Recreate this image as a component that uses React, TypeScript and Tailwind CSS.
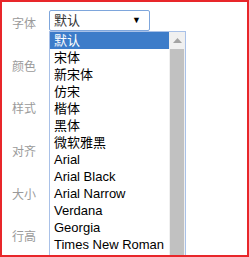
const LABELS = ["字体", "颜色", "样式", "对齐", "大小", "行高"];
const FONTS = [
  "默认",
  "宋体",
  "新宋体",
  "仿宋",
  "楷体",
  "黑体",
  "微软雅黑",
  "Arial",
  "Arial Black",
  "Arial Narrow",
  "Verdana",
  "Georgia",
  "Times New Roman",
];

export default function App() {
  return (
    <div
      className="relative w-[249px] h-[257px] border-2 border-[#e8262a] bg-white overflow-hidden"
      style={{ fontFamily: '"Liberation Sans", "Noto Sans CJK SC", sans-serif' }}
    >
      <div className="flex flex-col pt-[1px]">
        {LABELS.map((label, i) => (
          <div key={label} className="h-[42.6px] flex items-center pl-[10px]">
            <span className="text-[12px] text-[#9a9a9a] w-[37px]">{label}</span>
            {i === 0 && (
              <div className="-mt-[7px] w-[101px] h-[21px] border border-[#7ea6dc] rounded-[2px] flex items-center justify-between pl-[4px] pr-[8px]">
                <span className="text-[13px] text-[#333]">默认</span>
                <span className="text-[9px] text-black">▼</span>
              </div>
            )}
          </div>
        ))}
      </div>

      {/* dropdown list */}
      <div className="absolute left-[47px] top-[29px] w-[137px] h-[240px] border border-[#a9c1e8] bg-white flex">
        <div className="flex-1 flex flex-col">
          {FONTS.map((f, i) => (
            <div
              key={f}
              className={
                i === 0
                  ? "h-[17px] flex items-center pl-[4px] text-[13px] bg-[#3d7cc9] text-white"
                  : "h-[17px] flex items-center pl-[4px] text-[13px] text-black"
              }
            >
              {f}
            </div>
          ))}
        </div>
        <div className="w-[16px] bg-[#f0f0f0] flex flex-col items-center">
          <div className="h-[17px] flex items-center justify-center">
            <svg width="9" height="5" viewBox="0 0 9 5">
              <path d="M0 5 L4.5 0 L9 5 Z" fill="#a3a3a3" />
            </svg>
          </div>
          <div className="w-[14px] flex-1 bg-[#c1c1c1]" />
        </div>
      </div>
    </div>
  );
}
